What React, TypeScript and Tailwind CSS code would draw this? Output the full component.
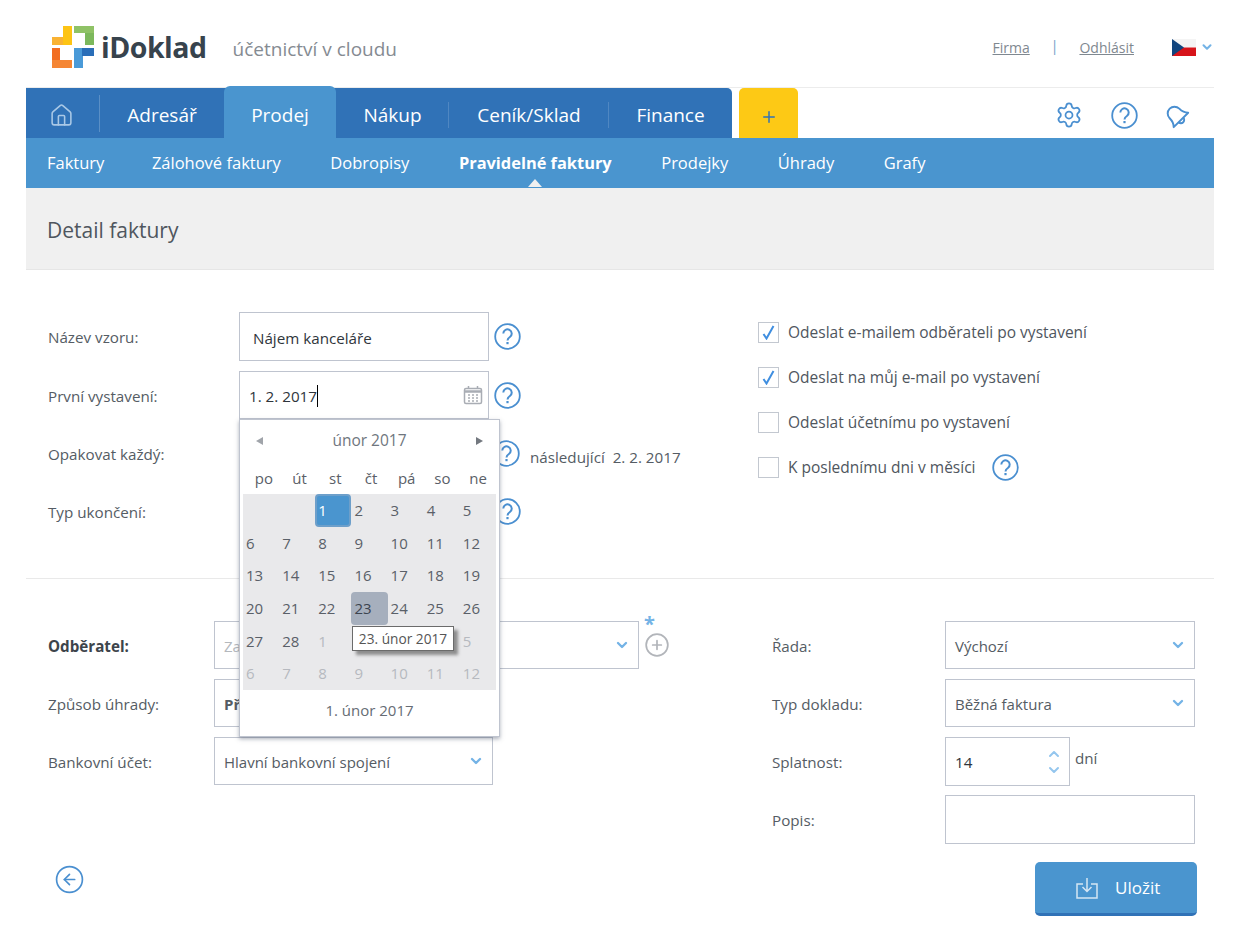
import { ChevronDown, ChevronUp, CircleArrowLeft, CirclePlus, House, Plus, Settings } from 'lucide-react';

const mainTabs = [
  { label: 'Adresář', width: 'w-[124px]' },
  { label: 'Prodej', width: 'w-[112px]', active: true },
  { label: 'Nákup', width: 'w-[113px]', line: true },
  { label: 'Ceník/Sklad', width: 'w-[160px]', line: true },
  { label: 'Finance', width: 'w-[123px]' },
];

const subTabs = ['Faktury', 'Zálohové faktury', 'Dobropisy', 'Pravidelné faktury', 'Prodejky', 'Úhrady', 'Grafy'];
const weekDays = ['po', 'út', 'st', 'čt', 'pá', 'so', 'ne'];

// 2, 3 and 4 of the next month sit under the tooltip
const days = [
  ['', '', '1', '2', '3', '4', '5'],
  ['6', '7', '8', '9', '10', '11', '12'],
  ['13', '14', '15', '16', '17', '18', '19'],
  ['20', '21', '22', '23', '24', '25', '26'],
  ['27', '28', '1', '', '', '', '5'],
  ['6', '7', '8', '9', '10', '11', '12'],
];

function Help() {
  return (
    <svg width="27" height="27" viewBox="0 0 27 27" fill="none" stroke="#4a8fd0" className="shrink-0">
      <circle cx="13.500" cy="13.500" r="12.300" strokeWidth="1.800" />
      <path d="M9.300 10.600a4.200 4.200 0 1 1 6.600 3.400c-1.500 1-2.400 1.800-2.400 3.400" strokeWidth="2" />
      <path d="M13.500 19v2.200" strokeWidth="2.200" />
    </svg>
  );
}

function BellIcon() {
  return (
    <svg width="28" height="28" viewBox="0 0 26 26" fill="none" stroke="#4a8fd0" strokeWidth="1.800" strokeLinejoin="round" className="-rotate-45">
      <path d="M3.500 19.500c2.200-2.200 3.200-4.500 3.200-8.500a6.300 6.300 0 0 1 12.600 0c0 4 1 6.300 3.200 8.500z" />
      <path d="M10 19.500a3 3 0 0 0 6 0" />
    </svg>
  );
}

function Logo() {
  return (
    <svg width="42" height="42" viewBox="0 0 42 42" className="shrink-0">
      <path d="M11 0h9v19H0v-8h11z" fill="#fdc414" />
      <path d="M0 11h11v8H0z" fill="#f9b233" />
      <path d="M22 0h20v19h-9V7H22z" fill="#7cb85c" />
      <path d="M22 0h20v7H22z" fill="#8fc266" />
      <path d="M0 22h8v12h12v8H0z" fill="#f26d21" />
      <path d="M0 34h20v8H0z" fill="#f58634" />
      <path d="M22 22h20v8H31v12h-9z" fill="#4a9ad8" />
      <path d="M30 22h12v8H30z" fill="#2a6eb8" />
    </svg>
  );
}

function Flag() {
  return (
    <svg width="24" height="17" viewBox="0 0 24 17">
      <rect width="24" height="8.500" fill="#f4f4f4" />
      <rect y="8.500" width="24" height="8.500" fill="#d7141a" />
      <path d="M0 0l12 8.500L0 17z" fill="#11457e" />
    </svg>
  );
}

function CalendarIcon() {
  return (
    <svg width="20" height="20" viewBox="0 0 20 20" fill="none" stroke="#a9adb4">
      <rect x="1.500" y="3.500" width="17" height="15" rx="1.500" strokeWidth="1.500" />
      <path d="M1.500 6.500h17" strokeWidth="2.500" />
      <path d="M5.500 1v3M14.500 1v3" strokeWidth="1.500" />
      <path d="M5 10h2M9 10h2M13 10h2M5 13h2M9 13h2M13 13h2M5 16h2M9 16h2M13 16h2" strokeWidth="1.500" />
    </svg>
  );
}

function SaveIcon() {
  return (
    <svg width="22" height="22" viewBox="0 0 22 22" fill="none" stroke="#d5e6f4" strokeWidth="1.500">
      <path d="M7 7H1v14h20V7h-6" />
      <path d="M11 1v13M6.500 10l4.500 4.500 4.500-4.500" />
    </svg>
  );
}

function Select({ text, width, bold, muted }: { text: string; width: string; bold?: boolean; muted?: boolean }) {
  return (
    <div className={`${width} h-[48px] border border-[#bfc4cf] bg-white flex items-center justify-between pl-[9px] pr-[8px] text-[15px] ${bold ? 'font-bold' : ''} ${muted ? 'text-[#b4b8bd]' : 'text-[#555c64]'}`}>
      <span className="pt-[3px]">{text}</span>
      <ChevronDown className="w-[16px] h-[16px] text-[#74b3e6]" strokeWidth={3.5} />
    </div>
  );
}

function Check({ label, checked, help }: { label: string; checked?: boolean; help?: boolean }) {
  return (
    <div className="flex items-center h-[21px]">
      <div className="w-[21px] h-[21px] border border-[#c3c8d0] flex items-center justify-center mr-[9px] shrink-0">
        {checked && (
          <svg width="13" height="15" viewBox="0 0 13 15" fill="none" stroke="#3f8ee0" strokeWidth="2">
            <path d="M1.500 9l3 4.500L11.500 1" />
          </svg>
        )}
      </div>
      <span className="text-[15.500px] text-[#4f565e]">{label}</span>
      {help && (
        <span className="ml-[16px]">
          <Help />
        </span>
      )}
    </div>
  );
}

function DatePicker() {
  return (
    <div className="absolute -left-px top-[47px] z-10 w-[261px] h-[318px] bg-white border border-[#bfc4cf] shadow-[0_2px_4px_rgba(90,100,120,0.5)] px-[3px] text-[15px] text-[#5a6068]">
      <div className="h-[42px] pt-[9px] flex items-start justify-between px-[13px] text-[#6f767e]">
        <span className="mt-[8px] w-0 h-0 border-y-[4px] border-y-transparent border-r-[7px] border-r-[#a0a4aa]" />
        <span className="text-[15.500px]">únor 2017</span>
        <span className="mt-[8px] w-0 h-0 border-y-[4px] border-y-transparent border-l-[7px] border-l-[#73787f]" />
      </div>
      <div className="grid grid-cols-7 h-[32px] items-center pl-[3px] text-center">
        {weekDays.map((d) => (
          <span key={d}>{d}</span>
        ))}
      </div>
      <div className="bg-[#e9e9eb] w-[253px] h-[196px] grid grid-cols-7 grid-rows-6">
        {days.map((row, r) =>
          row.map((d, c) => {
            const muted = r > 4 || (r === 4 && c > 1);
            const selected = r === 0 && c === 2;
            const hovered = r === 3 && c === 3;
            return (
              <div
                key={`${r}-${c}`}
                className={`flex items-center rounded-[4px] ${selected ? 'pl-[1px] bg-[#4a95cf] text-white border-2 border-[#6d9fca]' : 'pl-[3px]'} ${muted ? 'text-[#b6b9bf]' : ''} ${hovered ? 'bg-[#a6afbd] text-[#3c4450]' : ''}`}
              >
                {d}
              </div>
            );
          }),
        )}
      </div>
      <div className="text-center pt-[9px] text-[#666c74]">1. únor 2017</div>
      <div className="absolute left-[112px] top-[206px] h-[25px] w-[102px] pt-px bg-white border border-[#6b6b6b] shadow-[4px_4px_3px_rgba(80,80,80,0.6)] flex items-center justify-center text-[13.700px] text-[#555] whitespace-nowrap">
        23. únor 2017
      </div>
    </div>
  );
}

export default function App() {
  return (
    <div className="w-[1246px] h-[940px] overflow-hidden bg-white pl-[26px] pr-[32px] font-['Open_Sans',sans-serif] text-[#555c64]">
      <header className="h-[88px] border-b border-[#ececec] flex items-center relative">
        <div className="ml-[26px] mt-[7px] flex items-center">
          <Logo />
          <span className="ml-[7px] text-[28.500px] font-bold text-[#37434d] tracking-[-0.500px]">iDoklad</span>
          <span className="ml-[26px] mt-[5px] text-[19px] text-[#858b92]">účetnictví v cloudu</span>
        </div>
        <div className="ml-auto flex items-center text-[14px] text-[#7f8890] mt-[7px]">
          <a className="underline">Firma</a>
          <span className="mx-[21px] mb-[4px] text-[#6f9cc8]">|</span>
          <a className="underline">Odhlásit</a>
          <span className="ml-[38px] h-[17px]"><Flag /></span>
          <ChevronDown className="ml-[4px] w-[14px] h-[14px] text-[#74b3e6]" strokeWidth={3.5} />
        </div>
      </header>

      <nav className="h-[50px] flex items-end relative">
        <div className="flex h-[50px] bg-[#3072b7] rounded-tr-[5px] text-white text-[19px]">
          <div className="w-[74px] flex items-center justify-center relative pt-[4px] pr-[4px]">
            <House className="w-[25px] h-[25px] text-[#a9c8e6]" strokeWidth={1.5} />
            <span className="absolute right-0 top-[7px] h-[37px] w-px bg-[#5a8fc6]" />
          </div>
          {mainTabs.map((t) => (
            <div key={t.label} className={`${t.width} relative flex items-center justify-center ${t.active ? 'bg-[#4a95cf] rounded-t-[6px] -mt-[2px] pt-[6px]' : 'pt-[4px]'}`}>
              {t.label}
              {t.line && <span className="absolute right-0 top-[14px] h-[26px] w-px bg-[#4f87c2]" />}
            </div>
          ))}
        </div>
        <div className="ml-[7px] w-[59px] h-[50px] bg-[#fdc915] rounded-t-[5px] flex items-center justify-center pt-[8px]">
          <Plus className="w-[18px] h-[18px] text-[#3072b7]" strokeWidth={2} />
        </div>
        <div className="ml-auto h-[50px] pt-[4px] flex items-center text-[#4a8fd0]">
          <Settings className="w-[28px] h-[28px]" strokeWidth={1.500} />
          <span className="ml-[28px] h-[27px]"><Help /></span>
          <span className="ml-[24px] mr-[24px] h-[28px]"><BellIcon /></span>
        </div>
      </nav>

      <div className="h-[50px] pt-px bg-[#4a95cf] flex items-center pl-[21px] gap-[49.500px] text-[16.500px] text-white relative">
        {subTabs.map((t, i) => (
          <span key={t} className={i === 3 ? 'font-bold text-[16.400px] relative' : i === 0 ? '-mr-[2px]' : ''}>
            {t}
            {i === 3 && (
              <span className="absolute left-1/2 -translate-x-1/2 top-[28px] w-0 h-0 border-x-[7px] border-x-transparent border-b-[8px] border-b-[#f0f0f0]" />
            )}
          </span>
        ))}
      </div>

      <div className="h-[82px] pt-[5px] bg-[#f0f0f0] border-b border-[#e6e6e6] flex items-center pl-[21px] text-[21px] text-[#4f565e]">Detail faktury</div>

      <section className="h-[309px] pt-[42px] border-b border-[#e9e9e9] flex text-[15.200px]">
        <div className="w-[732px] pl-[22px] flex flex-col gap-[10px]">
          <div className="flex items-center h-[49px]">
            <label className="w-[191px] pt-px">Název vzoru:</label>
            <div className="w-[250px] h-[49px] border border-[#bfc4cf] flex items-center pl-[13px] pt-[4px] text-[#2f353b]">Nájem kanceláře</div>
            <span className="ml-[5px] h-[27px]"><Help /></span>
          </div>
          <div className="flex items-center h-[48px]">
            <label className="w-[191px] pt-[3px]">První vystavení:</label>
            <div className="relative w-[250px] h-[48px] border border-[#bfc4cf] flex items-center justify-between pl-[9px] pr-[5px] text-[#2f353b]">
              <span className="flex items-center pt-[2px]">
                1. 2. 2017
                <span className="w-px h-[22px] bg-black" />
              </span>
              <CalendarIcon />
              <DatePicker />
            </div>
            <span className="ml-[5px] h-[27px]"><Help /></span>
          </div>
          <div className="flex items-center h-[48px]">
            <label className="w-[191px] pt-[3px]">Opakovat každý:</label>
            <div className="w-[250px] h-[48px] border border-[#bfc4cf]" />
            <span className="ml-[4px] h-[27px]"><Help /></span>
            <span className="ml-[10px] pt-[9px]">následující&nbsp; 2. 2. 2017</span>
          </div>
          <div className="flex items-center h-[48px]">
            <label className="w-[191px] pt-[3px]">Typ ukončení:</label>
            <div className="w-[250px] h-[48px] border border-[#bfc4cf]" />
            <span className="ml-[5px] h-[27px]"><Help /></span>
          </div>
        </div>
        <div className="pt-[10px] flex flex-col gap-[24px]">
          <Check label="Odeslat e-mailem odběrateli po vystavení" checked />
          <Check label="Odeslat na můj e-mail po vystavení" checked />
          <Check label="Odeslat účetnímu po vystavení" />
          <Check label="K poslednímu dni v měsíci" help />
        </div>
      </section>

      <section className="flex pt-[42px] text-[15.200px]">
        <div className="w-[746px] pl-[22px] flex flex-col gap-[10px]">
          <div className="flex items-center relative">
            <label className="w-[166px] pt-[3px] font-bold text-[#3d444b]">Odběratel:</label>
            <Select text="Zadejte název" width="w-[425px]" muted />
            <CirclePlus className="ml-[5px] w-[26px] h-[26px] text-[#b2b5ba]" strokeWidth={1.600} />
            <span className="absolute left-[596px] -top-[7px] font-bold text-[#74b3e6] text-[20px] leading-none">*</span>
          </div>
          <div className="flex items-center">
            <label className="w-[166px] pt-[3px]">Způsob úhrady:</label>
            <Select text="Převodem" width="w-[279px]" bold />
          </div>
          <div className="flex items-center">
            <label className="w-[166px] pt-[3px]">Bankovní účet:</label>
            <Select text="Hlavní bankovní spojení" width="w-[279px]" />
          </div>
          <CircleArrowLeft className="mt-[69px] ml-[6px] w-[31px] h-[31px] text-[#4a8fd0]" strokeWidth={1.300} />
        </div>
        <div className="w-[423px] flex flex-col">
          <div className="flex items-center">
            <label className="w-[173px] pt-[3px]">Řada:</label>
            <Select text="Výchozí" width="w-[250px]" />
          </div>
          <div className="flex items-center mt-[10px]">
            <label className="w-[173px] pt-[3px]">Typ dokladu:</label>
            <Select text="Běžná faktura" width="w-[250px]" />
          </div>
          <div className="flex items-center mt-[10px]">
            <label className="w-[173px] pt-px">Splatnost:</label>
            <div className="w-[125px] h-[49px] border border-[#bfc4cf] flex items-center justify-between pl-[9px] pr-[7px] text-[#2f353b]">
              <span className="pt-[2px]">14</span>
              <div className="flex flex-col text-[#94c6ee]">
                <ChevronUp className="w-[16px] h-[16px]" strokeWidth={3} />
                <ChevronDown className="w-[16px] h-[16px]" strokeWidth={3} />
              </div>
            </div>
            <span className="ml-[5px] mb-[6px]">dní</span>
          </div>
          <div className="flex items-center mt-[9px]">
            <label className="w-[173px] pt-px">Popis:</label>
            <div className="w-[250px] h-[49px] border border-[#bfc4cf]" />
          </div>
          <button className="mt-[18px] ml-[263px] w-[162px] h-[54px] pl-[41px] bg-[#4a95cf] border-b-[3px] border-[#3072b7] rounded-[5px] flex items-center gap-[17px] text-[17px] text-white">
            <SaveIcon />
            Uložit
          </button>
        </div>
      </section>
    </div>
  );
}
